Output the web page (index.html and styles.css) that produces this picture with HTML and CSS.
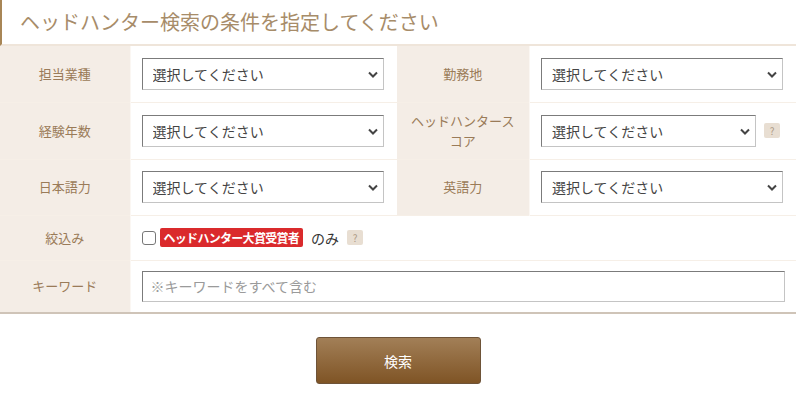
FILE: index.html
```html
<!DOCTYPE html>
<html lang="ja">
<head>
<meta charset="utf-8">
<link rel="stylesheet" href="styles.css">
</head>
<body>

<h2 class="title">ヘッドハンター検索の条件を指定してください</h2>

<form class="search" action="#" method="get">
  <table class="cond">
    <colgroup>
      <col class="c-label"><col class="c-value"><col class="c-label2"><col class="c-value">
    </colgroup>
    <tr>
      <th>担当業種</th>
      <td>
        <div class="sel"><select><option>選択してください</option></select>
          <svg class="arrow" viewBox="0 0 10 7"><path d="M1 1.5 L5 5.5 L9 1.5" /></svg></div>
      </td>
      <th>勤務地</th>
      <td>
        <div class="sel"><select><option>選択してください</option></select>
          <svg class="arrow" viewBox="0 0 10 7"><path d="M1 1.5 L5 5.5 L9 1.5" /></svg></div>
      </td>
    </tr>
    <tr class="row-tall">
      <th>経験年数</th>
      <td>
        <div class="sel"><select><option>選択してください</option></select>
          <svg class="arrow" viewBox="0 0 10 7"><path d="M1 1.5 L5 5.5 L9 1.5" /></svg></div>
      </td>
      <th>ヘッドハンタースコア</th>
      <td>
        <div class="inline">
          <div class="sel sel-short"><select><option>選択してください</option></select>
            <svg class="arrow" viewBox="0 0 10 7"><path d="M1 1.5 L5 5.5 L9 1.5" /></svg></div>
          <span class="help">?</span>
        </div>
      </td>
    </tr>
    <tr>
      <th>日本語力</th>
      <td>
        <div class="sel"><select><option>選択してください</option></select>
          <svg class="arrow" viewBox="0 0 10 7"><path d="M1 1.5 L5 5.5 L9 1.5" /></svg></div>
      </td>
      <th>英語力</th>
      <td>
        <div class="sel"><select><option>選択してください</option></select>
          <svg class="arrow" viewBox="0 0 10 7"><path d="M1 1.5 L5 5.5 L9 1.5" /></svg></div>
      </td>
    </tr>
    <tr class="row-filter">
      <th>絞込み</th>
      <td colspan="3">
        <label class="inline">
          <input type="checkbox" class="chk">
          <span class="award">ヘッドハンター大賞受賞者</span>
          <span class="only">のみ</span>
          <span class="help">?</span>
        </label>
      </td>
    </tr>
    <tr class="row-key">
      <th>キーワード</th>
      <td colspan="3"><input type="text" class="keyword" placeholder="※キーワードをすべて含む"></td>
    </tr>
  </table>

  <div class="actions">
    <button type="submit" class="btn">検索</button>
  </div>
</form>

</body>
</html>
```

FILE: styles.css
```css
* {
  box-sizing: border-box;
}

body {
  margin: 0;
  font-family: "Noto Sans CJK JP", "Noto Sans", sans-serif;
  color: #333;
  background: #fff;
}

.title {
  margin: 0;
  height: 46px;
  padding: 0 0 0 18px;
  line-height: 44px;
  font-size: 20px;
  font-weight: normal;
  color: #a78c69;
  border-left: 2px solid #a88656;
  border-bottom: 2px solid #efe5da;
}

.cond {
  width: 100%;
  border-collapse: collapse;
  table-layout: fixed;
  border-bottom: 2px solid #cfc4b8;
}

.c-label { width: 130px; }
.c-label2 { width: 133px; }

.cond th,
.cond td {
  border-top: 1px solid #f6efe7;
  padding: 0 11px;
  vertical-align: middle;
}

.cond tr:first-child th,
.cond tr:first-child td {
  border-top: none;
}

.cond th {
  background: #f4ede6;
  color: #9a7b58;
  font-size: 13px;
  font-weight: normal;
  line-height: 20px;
  text-align: center;
  border-right: 1px solid #fbf7f3;
  padding: 0 14px;
}

.cond tr {
  height: 56px;
}

.cond .row-tall {
  height: 57px;
}

.cond .row-filter {
  height: 45px;
}

.cond .row-key {
  height: 53px;
}

.sel {
  position: relative;
  width: 242px;
}

.sel select {
  display: block;
  width: 100%;
  height: 32px;
  padding: 0 30px 0 10px;
  font-family: inherit;
  font-size: 14px;
  color: #444;
  background: #fff;
  border: 1px solid;
  border-color: #7b7b7b #c4c4c4 #c4c4c4 #7b7b7b;
  border-radius: 0;
  appearance: none;
  -webkit-appearance: none;
}

.sel .arrow {
  position: absolute;
  right: 6px;
  top: 13px;
  width: 10px;
  height: 7px;
  fill: none;
  stroke: #444;
  stroke-width: 2;
  pointer-events: none;
}

.inline {
  display: flex;
  align-items: center;
}

.sel-short {
  width: 215px;
}

.help {
  display: inline-block;
  width: 16px;
  height: 15px;
  margin-left: 8px;
  background: #e8ded2;
  color: #ad9a86;
  font-size: 10px;
  line-height: 15px;
  text-align: center;
  border-radius: 2px;
}

.chk {
  width: 14px;
  height: 14px;
  margin: 0 4px 0 0;
  appearance: none;
  -webkit-appearance: none;
  border: 1px solid #777;
  border-radius: 3px;
  background: #fff;
}

.award {
  background: #da2a2c;
  color: #fff;
  font-size: 12px;
  font-weight: bold;
  letter-spacing: -0.7px;
  line-height: 19px;
  padding: 0 4px;
  border-radius: 2px;
}

.only {
  margin-left: 8px;
  font-size: 14px;
  color: #333;
}

.keyword {
  display: block;
  width: 100%;
  height: 31px;
  padding: 0 8px;
  font-family: inherit;
  font-size: 14px;
  border: 1px solid;
  border-color: #7b7b7b #c4c4c4 #c4c4c4 #7b7b7b;
}

.keyword::placeholder {
  color: #9a9a9a;
}

.actions {
  display: flex;
  justify-content: center;
  padding-top: 23px;
}

.btn {
  width: 165px;
  height: 47px;
  font-family: inherit;
  font-size: 14px;
  color: #fff;
  background: linear-gradient(#a27f57, #7f5425);
  border: 1px solid #6e5338;
  border-radius: 3px;
  cursor: pointer;
}
```
